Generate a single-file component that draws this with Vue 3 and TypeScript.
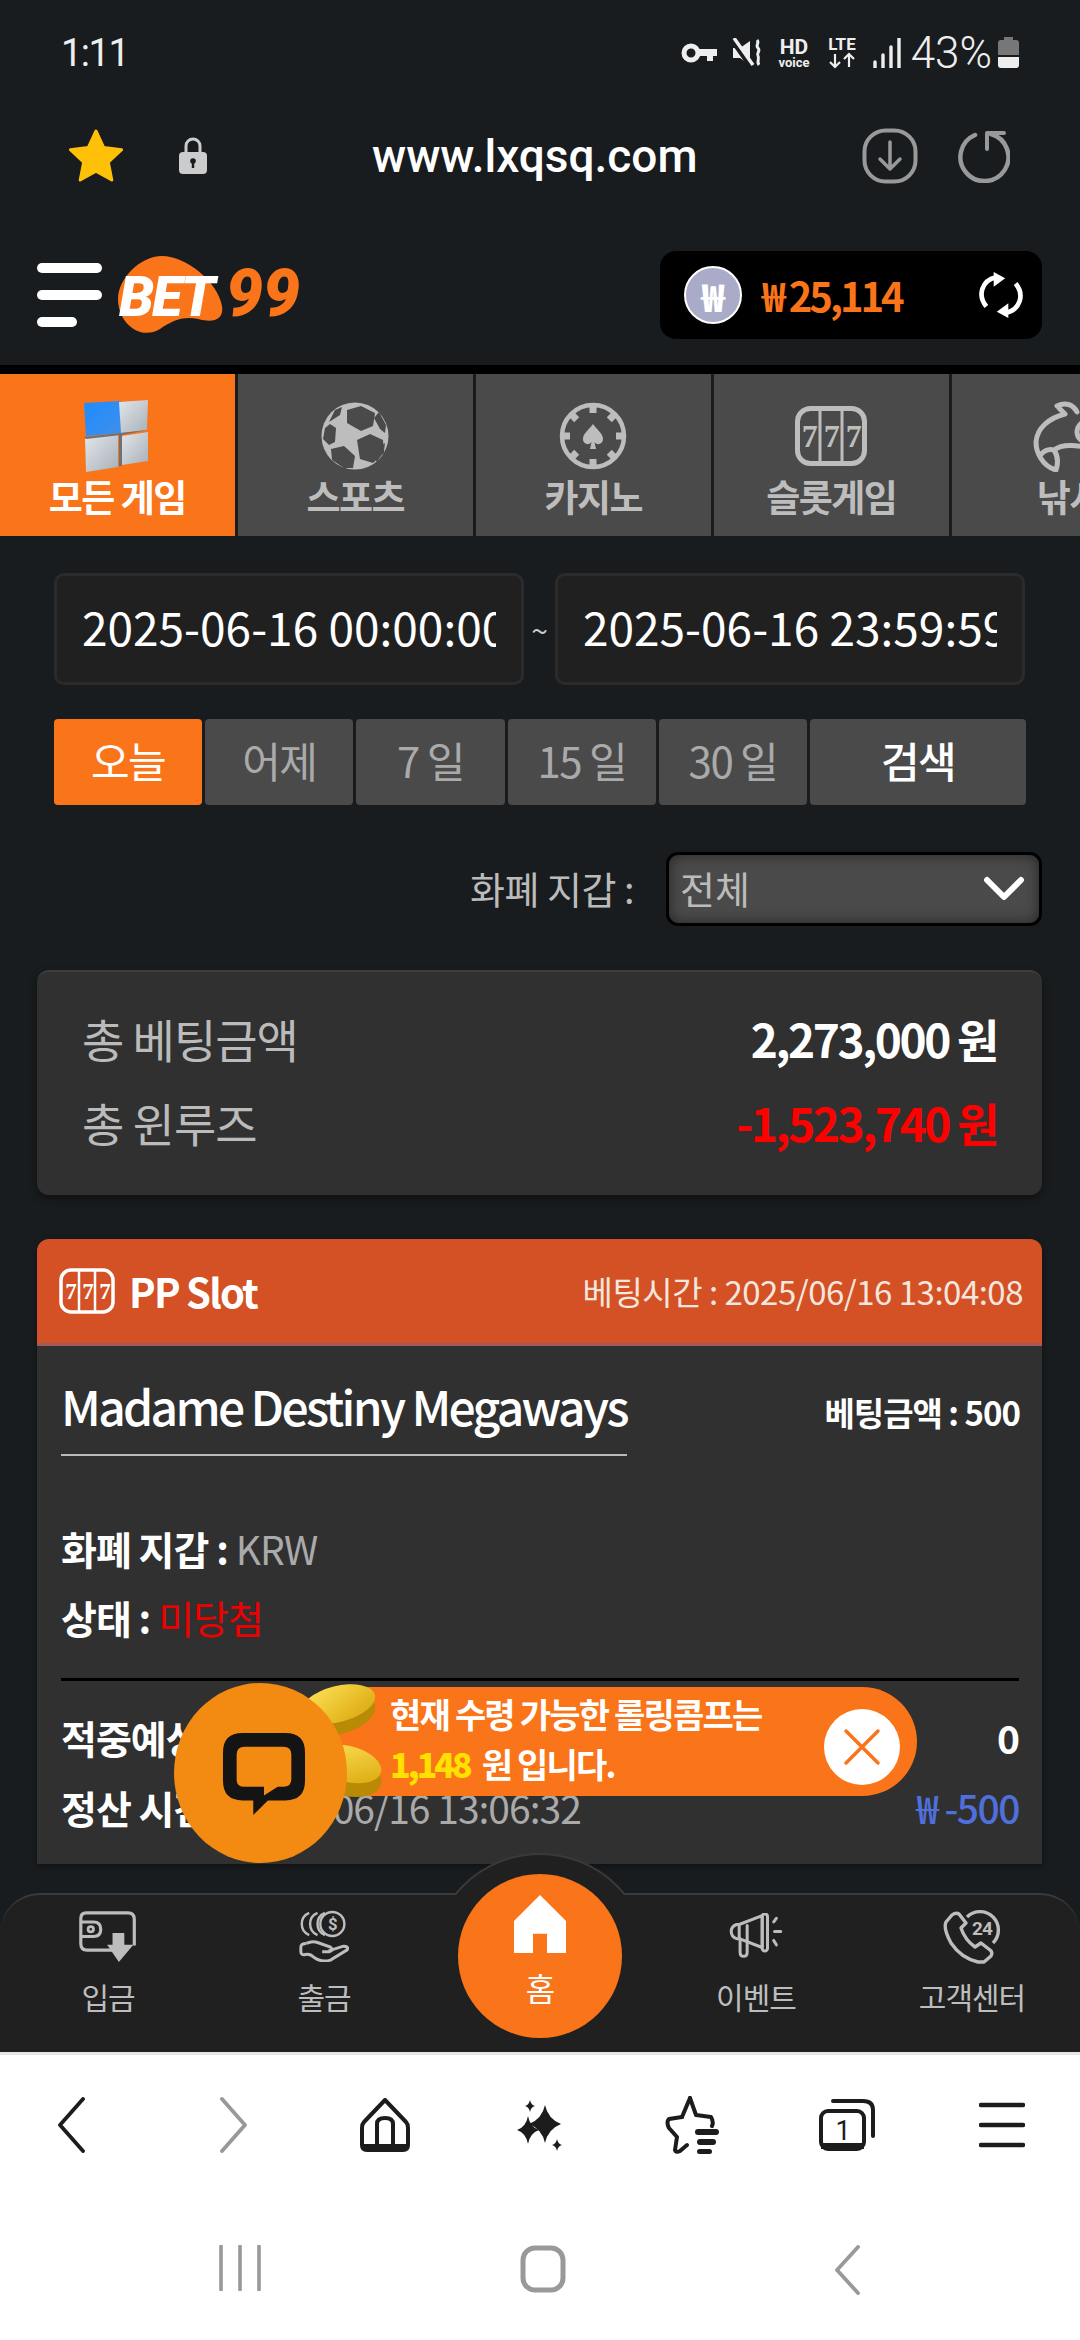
<template>
  <div class="phone">
    <div class="status">
      <span class="time">1:11</span>
      <div class="status-right">
        <svg width="36" height="20" viewBox="0 0 36 20"><circle cx="10" cy="10" r="7" fill="none" stroke="#eee" stroke-width="5"/><path d="M17 6h19v7h-4v5h-6v-5h-9z" fill="#eee"/></svg>
        <svg width="30" height="30" viewBox="0 0 30 30"><path d="M1 10h7l10-7v24L8 20H1z" fill="#eee"/><path d="M0 1l19 27" stroke="#191c1e" stroke-width="6"/><path d="M2 0l19 27" stroke="#eee" stroke-width="3.400"/><path d="M25 2c3 3-2 5 1 8s-2 5 0 8-2 5 1 9" fill="none" stroke="#eee" stroke-width="3"/></svg>
        <svg width="34" height="32" viewBox="0 0 34 32"><text x="17" y="17" class="hd">HD</text><text x="17" y="30" class="voice">voice</text></svg>
        <svg width="32" height="34" viewBox="0 0 32 34"><text x="16" y="14" class="lte">LTE</text><path d="M9 18v13M4 26l5 5 5-5M23 31V18M18 23l5-5 5 5" fill="none" stroke="#eee" stroke-width="2.200"/></svg>
        <svg width="28" height="30" viewBox="0 0 28 30"><path d="M2 24v6M10 17v13M18 9v21M26 0v30" stroke="#eee" stroke-width="3.400" stroke-linecap="round" fill="none"/></svg>
        <span class="batt-text">43%</span>
        <svg width="21" height="31" viewBox="0 0 21 31"><path d="M6 0h9v3h3q3 0 3 3v12H0V6q0-3 3-3h3z" fill="#777"/><path d="M0 20h21v8q0 3-3 3H3q-3 0-3-3z" fill="#eee"/></svg>
      </div>
    </div>

    <div class="urlbar">
      <svg class="url-star" width="56" height="54" viewBox="0 0 56 54"><path d="M28 2l7.600 16.500 18 2.200-13.300 12.400 3.500 17.900L28 42.100l-15.800 8.900 3.500-17.900L2.400 20.700l18-2.200z" fill="#ffc107" stroke="#ffc107" stroke-width="3" stroke-linejoin="round"/></svg>
      <svg class="url-lock" width="30" height="38" viewBox="0 0 30 38"><path d="M8 17V9a7 7 0 0 1 14 0v8" fill="none" stroke="#ccc" stroke-width="3"/><rect x="1" y="15" width="28" height="22" rx="4" fill="#ccc"/><circle cx="15" cy="24" r="2.800" fill="#191c1e"/><rect x="13.800" y="24" width="2.400" height="7" fill="#191c1e"/></svg>
      <span class="url">www.lxqsq.com</span>
      <svg class="url-dl" width="56" height="56" viewBox="0 0 56 56"><rect x="2.500" y="2.500" width="51" height="51" rx="21" fill="none" stroke="#999" stroke-width="4"/><path d="M28 14v27M18 31l10 10 10-10" fill="none" stroke="#999" stroke-width="3.500" stroke-linecap="round" stroke-linejoin="round"/></svg>
      <svg class="url-re" width="54" height="54" viewBox="0 0 54 54"><path d="M19 6A24 24 0 1 0 35 5" fill="none" stroke="#999" stroke-width="4.500" stroke-linecap="round"/><path d="M31 20V4h17" fill="none" stroke="#999" stroke-width="4" stroke-linecap="round" stroke-linejoin="round"/></svg>
    </div>

    <header class="topbar">
      <div class="menu"><i></i><i></i><i class="short"></i></div>
      <svg class="logo" width="190" height="80" viewBox="0 0 190 80">
        <path d="M2 44C2 24 24 1 46 1c24 0 56 26 60 50 2 14-8 17-24 13-16-3-26 2-38 10C24 86 2 68 2 44z" fill="#fa7419"/>
        <text x="3" y="61" class="logo-bet">BET</text>
        <text x="110" y="61" class="logo-99">99</text>
      </svg>
      <div class="balance">
        <span class="coin">₩</span>
        <span class="amount">₩ 25,114</span>
        <svg width="46" height="48" viewBox="0 0 44 44"><path d="M8 33C-1 22 4 8 17 5" fill="none" stroke="#fff" stroke-width="4.500"/><path d="M15 0l11 6-11 8z" fill="#fff"/><path d="M36 11c9 11 4 25-9 28" fill="none" stroke="#fff" stroke-width="4.500"/><path d="M29 44l-11-6 11-8z" fill="#fff"/></svg>
      </div>
    </header>

    <nav class="tabs">
      <div class="tab active">
        <svg width="70" height="72" viewBox="0 0 70 72">
          <defs>
            <linearGradient id="blue" x1="0" y1="0" x2="1" y2="1"><stop offset="0" stop-color="#1e8cff"/><stop offset="1" stop-color="#3f8fe8"/></linearGradient>
            <linearGradient id="grey" x1="0" y1="0" x2="1" y2="1"><stop offset="0" stop-color="#e2e6ea"/><stop offset="1" stop-color="#a8b0b8"/></linearGradient>
          </defs>
          <path d="M2 3l37-2v32L4 36z" fill="url(#blue)"/>
          <path d="M37 2l29-2-1 30-26 3z" fill="url(#grey)"/>
          <path d="M3 38l33-3v32L4 72z" fill="url(#grey)"/>
          <path d="M40 36l26-4v29l-26 4z" fill="url(#grey)"/>
          <path d="M2 37l36-4 28-3-27 5-35 4z" fill="#6b7378"/>
          <path d="M37 33h3v33h-3z" fill="#6b7378"/>
        </svg>
        <span>모든 게임</span>
      </div>
      <div class="tab">
        <svg width="68" height="68" viewBox="-34 -34 68 68">
          <circle r="33.500" fill="#bdbdbd"/>
          <g fill="#4a4a4a">
            <path d="M-8-26l14-4 14 7-2 13-12 5-14-8z"/>
            <path d="M2 4l13-6 13 6 1 13-11 10-13-4z"/>
            <path d="M-24 13l13-3 11 10-2 12-9 0-12-8z"/>
            <path d="M-30-8l5-4 6 4-1 14-6 3-6-6z"/>
            <path d="M-20-26l7-3-2 8-11 7z"/>
            <path d="M24-24l7 13-1 8-5-4-6-11z"/>
            <path d="M30 7l-1 8-7 11-2-3 6-13z"/>
          </g>
        </svg>
        <span>스포츠</span>
      </div>
      <div class="tab">
        <svg width="68" height="68" viewBox="-34 -34 68 68">
          <circle r="31" fill="none" stroke="#bdbdbd" stroke-width="4.500"/>
          <g fill="#bdbdbd">
            <rect v-for="a in [0, 45, 90, 135, 180, 225, 270, 315]" :key="a" x="-3.500" y="-31" width="7" height="8" :transform="`rotate(${a})`"/>
          </g>
          <path d="M0-12C3-7 10-3 10 3c0 5-6 7-8.500 3l1.500 7H-3l1.500-7C-4 10-10 8-10 3-10-3-3-7 0-12z" fill="#bdbdbd"/>
        </svg>
        <span>카지노</span>
      </div>
      <div class="tab">
        <svg width="72" height="60" viewBox="0 0 72 60">
          <rect x="2.500" y="2.500" width="67" height="55" rx="13" fill="none" stroke="#bdbdbd" stroke-width="5"/>
          <path d="M25 3v54M47 3v54" stroke="#bdbdbd" stroke-width="3"/>
          <text x="14" y="41" class="seven">7</text>
          <text x="36" y="41" class="seven">7</text>
          <text x="58" y="41" class="seven">7</text>
        </svg>
        <span>슬롯게임</span>
      </div>
      <div class="tab">
        <svg width="72" height="72" viewBox="0 0 72 72">
          <path d="M24 6c8-4 16-2 20 6M26 8c4 4 4 4 6 6C16 18 4 28 3 42c0 10 6 24 20 28 2-6 2-14-2-20-6-2-12 2-14 6 M21 50c10-8 26-4 46 0M70 18c-14-4-26 6-26 14 0 8 10 14 24 16" fill="none" stroke="#bdbdbd" stroke-width="5" stroke-linejoin="round" stroke-linecap="round"/>
        </svg>
        <span>낚시</span>
      </div>
    </nav>

    <main class="content">
      <div class="dates">
        <div class="date"><span>2025-06-16 00:00:00</span></div>
        <span class="tilde">~</span>
        <div class="date"><span>2025-06-16 23:59:59</span></div>
      </div>

      <div class="ranges">
        <button
          v-for="r in ranges"
          :key="r"
          class="range"
          :class="{ on: r === '오늘' }"
        >{{ r }}</button>
        <button class="range search">검색</button>
      </div>

      <div class="wallet">
        <span class="wallet-label">화폐 지갑 :</span>
        <div class="select">
          <span>전체</span>
          <svg width="42" height="26" viewBox="0 0 42 26"><path d="M4 4l17 17L38 4" fill="none" stroke="#fff" stroke-width="6" stroke-linecap="round" stroke-linejoin="round"/></svg>
        </div>
      </div>

      <section class="summary">
        <div class="sum-row"><span>총 베팅금액</span><b>2,273,000 원</b></div>
        <div class="sum-row"><span>총 윈루즈</span><b class="red">-1,523,740 원</b></div>
      </section>

      <section class="game">
        <div class="game-head">
          <div class="game-name">
            <svg width="56" height="46" viewBox="0 0 56 46">
              <rect x="2" y="2" width="52" height="42" rx="10" fill="none" stroke="#fff" stroke-width="3.500"/>
              <path d="M20 2v42M36 2v42" stroke="#fff" stroke-width="2.500"/>
              <text x="11" y="31" class="seven small">7</text>
              <text x="28" y="31" class="seven small">7</text>
              <text x="45" y="31" class="seven small">7</text>
            </svg>
            <span>PP Slot</span>
          </div>
          <span class="bet-time">베팅시간 : 2025/06/16 13:04:08</span>
        </div>
        <div class="game-body">
          <div class="title-row">
            <h2>Madame Destiny Megaways</h2>
            <span class="bet-amount">베팅금액 : 500</span>
          </div>
          <p class="line first">화폐 지갑 : <em>KRW</em></p>
          <p class="line">상태 : <em class="lost">미당첨</em></p>
          <div class="divider"></div>
          <div class="line split top"><span>적중예상금액 :</span><span>0</span></div>
          <div class="line split"><span>정산 시간 : <em>2025/06/16 13:06:32</em></span><span class="blue">₩ -500</span></div>
        </div>
      </section>

      <div class="promo">
        <svg class="coins" width="90" height="128" viewBox="0 0 90 128">
          <defs>
            <linearGradient id="gold" x1="0" y1="0" x2="1" y2="1"><stop offset="0" stop-color="#ffe35a"/><stop offset="1" stop-color="#d9a60a"/></linearGradient>
          </defs>
          <ellipse cx="44" cy="30" rx="38" ry="20" fill="#b98a06" transform="rotate(-14 44 30)"/>
          <ellipse cx="44" cy="20" rx="38" ry="18" fill="url(#gold)" transform="rotate(-14 44 20)"/>
          <ellipse cx="54" cy="92" rx="34" ry="20" fill="#b98a06" transform="rotate(14 54 92)"/>
          <ellipse cx="54" cy="80" rx="34" ry="18" fill="url(#gold)" transform="rotate(14 54 80)"/>
        </svg>
        <div class="promo-text">
          <span>현재 수령 가능한 롤링콤프는</span>
          <span><b>1,148</b> 원 입니다.</span>
        </div>
        <div class="promo-close">
          <svg width="38" height="38" viewBox="0 0 38 38"><path d="M3 3l32 32M35 3L3 35" stroke="#fa7419" stroke-width="3.500" stroke-linecap="round"/></svg>
        </div>
      </div>

      <div class="chat">
        <svg width="84" height="84" viewBox="0 0 84 86"><path fill-rule="evenodd" d="M20 0h44q20 0 20 20v29q0 20-20 20H46L31 84V69H20Q0 69 0 49V20Q0 0 20 0zM22 14q-8 0-8 8v26q0 7 8 7h20v9l14-9h6q8 0 8-8V22q0-8-8-8z" fill="#141414"/></svg>
      </div>
    </main>

    <footer class="bottom-nav">
      <div class="bump"></div>
      <div class="nav-item">
        <div class="nav-icon"><svg width="58" height="51" viewBox="0 0 64 56"><path d="M38 43H9q-7 0-7-7V8q0-6 6-6h46q7 0 7 7v29" fill="none" stroke="#bdbdbd" stroke-width="3.500"/><path d="M2 12h14q8 0 8 8t-8 8H3" fill="none" stroke="#bdbdbd" stroke-width="3.500"/><circle cx="13" cy="20" r="3" fill="none" stroke="#bdbdbd" stroke-width="3"/><path d="M37 24h13v13h10L44 56 31 37h6z" fill="#bdbdbd"/></svg></div>
        <span>입금</span>
      </div>
      <div class="nav-item">
        <div class="nav-icon"><svg width="50" height="52" viewBox="0 0 54 56"><g fill="none" stroke="#bdbdbd" stroke-width="2.600"><path d="M11 3A13 13 0 0 0 11 27"/><path d="M20 3A13 13 0 0 0 20 27"/><path d="M28 3A13 13 0 0 0 28 27"/><circle cx="36" cy="15" r="13"/><path d="M8 36q-6 0-6 4v5q0 4 5 3 5-1 9 3 8 6 18 3l18-11q2-4-4-4l-16 5" stroke-width="3.200"/><path d="M8 36q6-3 12-1l14 5q4 3-1 5l-8 0" stroke-width="3.200"/></g><text x="36" y="21" class="dollar">$</text></svg></div>
        <span>출금</span>
      </div>
      <div class="nav-home">
        <svg width="52" height="58" viewBox="0 0 52 60" preserveAspectRatio="none"><path d="M26 0l26 27v33H33V40H19v20H0V27z" fill="#fff"/></svg>
        <span>홈</span>
      </div>
      <div class="nav-item">
        <div class="nav-icon"><svg width="58" height="46" viewBox="0 0 60 52"><g fill="none" stroke="#bdbdbd" stroke-width="3.400" stroke-linejoin="round" stroke-linecap="round"><path d="M11 13v16H8q-6-2-6-8t6-8zM11 13l26-10v36L11 29zM20 14v17"/><rect x="37" y="1" width="6" height="42" rx="3"/><path d="M12 29v15q0 5 4 5t4-5V31"/><path d="M50 10l3-4M51 21h7M50 31l3 5"/></g></svg></div>
        <span>이벤트</span>
      </div>
      <div class="nav-item">
        <div class="nav-icon"><svg width="58" height="58" viewBox="0 0 58 58"><g fill="none" stroke="#bdbdbd" stroke-width="3.400" stroke-linejoin="round"><path d="M24 10A18 18 0 1 1 50 36"/><path d="M9 8L3 15q-3 6 5 21 10 15 27 19h6l7-6q2-4-1-6l-9-7-6 4q-10-7-14-19l5-5-7-9q-3-2-7 1z"/></g><text x="39" y="28" class="h24">24</text></svg></div>
        <span>고객센터</span>
      </div>
      <div class="home-circle"></div>
    </footer>

    <div class="browser-bar">
      <svg width="34" height="56" viewBox="0 0 34 56"><path d="M27 2L4 28l23 26" fill="none" stroke="#1c1c1c" stroke-width="3.800" stroke-linecap="round" stroke-linejoin="round"/></svg>
      <svg width="34" height="56" viewBox="0 0 34 56"><path d="M5 2l23 26L5 54" fill="none" stroke="#999" stroke-width="3.800" stroke-linecap="round" stroke-linejoin="round"/></svg>
      <svg width="52" height="54" viewBox="0 0 52 54"><path d="M26 2L5 24q-2 2-2 6v17q0 5 5 5h36q5 0 5-5V30q0-4-2-6z" fill="none" stroke="#1c1c1c" stroke-width="4" stroke-linejoin="round"/><path d="M18 50V26q0-6 8-6t8 6v24" fill="none" stroke="#1c1c1c" stroke-width="4"/><path d="M3 46h46v6H3z" fill="#1c1c1c"/></svg>
      <svg width="46" height="52" viewBox="0 0 46 52"><g fill="#1c1c1c"><path d="M29 6Q32 20 45 25Q32 30 29 44Q26 30 13 25Q26 20 29 6z"/><path d="M12 17Q14 28 23 31Q14 34 12 45Q10 34 1 31Q10 28 12 17z"/><path d="M14 1Q15 6 19 7Q15 8 14 13Q13 8 9 7Q13 6 14 1z"/><path d="M41 40Q42 45 46 46Q42 47 41 52Q40 47 36 46Q40 45 41 40z"/></g></svg>
      <svg width="58" height="58" viewBox="0 0 58 58"><path d="M27 2l6 17 15 2q3 5 1 9M19 21L6 23q-3 3 0 9l8 9-2 13q1 3 5 1l7-6" fill="none" stroke="#1c1c1c" stroke-width="4" stroke-linejoin="round" stroke-linecap="round"/><path d="M27 2l-8 19" stroke="#1c1c1c" stroke-width="4" stroke-linecap="round"/><rect x="32" y="33" width="24" height="6" rx="3" fill="#1c1c1c"/><rect x="34" y="43" width="19" height="6" rx="3" fill="#1c1c1c"/><rect x="34" y="53" width="15" height="5" rx="2.500" fill="#1c1c1c"/></svg>
      <svg width="56" height="52" viewBox="0 0 56 52"><rect x="2" y="12" width="43" height="38" rx="7" fill="none" stroke="#1c1c1c" stroke-width="4"/><path d="M14 2h30q10 0 10 9v26" fill="none" stroke="#1c1c1c" stroke-width="4" stroke-linecap="round"/><path d="M2 44h43v6H2z" fill="#1c1c1c"/><text x="24" y="41" class="tabnum">1</text></svg>
      <svg width="46" height="46" viewBox="0 0 46 46"><path d="M2 3h42M2 23h42M2 43h42" stroke="#1c1c1c" stroke-width="4.400" stroke-linecap="round"/></svg>
    </div>

    <div class="sys-nav">
      <svg width="42" height="46" viewBox="0 0 42 46"><path d="M2 1v44M21 1v44M40 1v44" stroke="#999" stroke-width="3.600" stroke-linecap="round"/></svg>
      <svg width="46" height="48" viewBox="0 0 46 48"><rect x="3" y="3" width="40" height="42" rx="12" fill="none" stroke="#999" stroke-width="5"/></svg>
      <svg width="28" height="50" viewBox="0 0 28 50"><path d="M25 2L4 25l21 23" fill="none" stroke="#999" stroke-width="3.800" stroke-linecap="round" stroke-linejoin="round"/></svg>
    </div>
  </div>
</template>

<script setup lang="ts">
const ranges: string[] = ["오늘", "어제", "7 일", "15 일", "30 일"];
</script>

<style scoped>
.phone {
  width: 1080px;
  height: 2340px;
  overflow: hidden;
  display: flex;
  flex-direction: column;
  background: #191c1e;
  font-family: "Noto Sans CJK KR", "Noto Sans", sans-serif;
  color: #fff;
}

/* status bar */
.status {
  height: 100px;
  flex-shrink: 0;
  box-sizing: border-box;
  padding: 5px 61px 0 61px;
  display: flex;
  justify-content: space-between;
  align-items: center;
  font-family: Roboto, sans-serif;
  color: #eee;
}
.time {
  font-size: 38px;
  letter-spacing: -1.500px;
}
.status-right {
  display: flex;
  align-items: center;
  gap: 15px;
}
.batt-text {
  font-size: 44px;
  font-weight: 300;
  margin: 0 -9px 0 -5px;
}
.hd {
  font: 700 21px Roboto, sans-serif;
  fill: #eee;
  text-anchor: middle;
}
.voice {
  font: 700 13px Roboto, sans-serif;
  fill: #eee;
  text-anchor: middle;
}
.lte {
  font: 700 17px Roboto, sans-serif;
  fill: #eee;
  text-anchor: middle;
}

/* url bar */
.urlbar {
  height: 115px;
  flex-shrink: 0;
  box-sizing: border-box;
  display: flex;
  align-items: center;
  padding: 0 0 4px 68px;
}
.url-lock {
  margin-left: 54px;
}
.url {
  margin-left: 164px;
  font: 500 46px Roboto, sans-serif;
  color: #fff;
}
.url-dl {
  margin-left: 164px;
}
.url-re {
  margin-left: 38px;
}

/* site header */
.topbar {
  height: 150px;
  flex-shrink: 0;
  box-sizing: border-box;
  padding: 10px 38px 0 37px;
  display: flex;
  align-items: center;
}
.menu {
  width: 65px;
  display: flex;
  flex-direction: column;
  gap: 17px;
}
.menu i {
  display: block;
  height: 10px;
  border-radius: 5px;
  background: #fff;
}
.menu i.short {
  width: 40px;
}
.logo {
  margin-left: 14px;
}
.logo-bet {
  font: italic 900 56px Roboto, sans-serif;
  letter-spacing: -2px;
  fill: #fff;
}
.logo-99 {
  font: italic 900 66px Roboto, sans-serif;
  fill: #fa7419;
}
.balance {
  margin-left: auto;
  width: 382px;
  height: 88px;
  border-radius: 16px;
  background: #000;
  display: flex;
  align-items: center;
  padding: 0 18px 0 24px;
  box-sizing: border-box;
}
.coin {
  width: 58px;
  height: 58px;
  border-radius: 50%;
  background: #a9abc9;
  border: 2px solid #fff;
  box-sizing: border-box;
  display: flex;
  align-items: center;
  justify-content: center;
  font: 900 38px "Noto Sans CJK KR", sans-serif;
  color: #fff;
}
.amount {
  margin-left: 20px;
  font-size: 40px;
  font-weight: 700;
  letter-spacing: -3px;
  color: #fa7419;
}
.balance svg {
  margin-left: auto;
}

/* game tabs */
.tabs {
  flex-shrink: 0;
  height: 162px;
  border-top: 9px solid #000;
  display: flex;
  gap: 3.500px;
  overflow: hidden;
}
.tab {
  flex: 0 0 234.500px;
  background: #4a4a4a;
  display: flex;
  flex-direction: column;
  align-items: center;
  padding-top: 26px;
  box-sizing: border-box;
  color: #bdbdbd;
  font-size: 37px;
  font-weight: 700;
  line-height: 48px;
  letter-spacing: -1.500px;
}
.tab svg {
  height: 72px;
}
.tab.active {
  background: #fa7419;
  color: #fff;
}
.seven {
  font: 700 32px "Liberation Serif", serif;
  fill: #bdbdbd;
  text-anchor: middle;
}
.seven.small {
  font-size: 23px;
  fill: #fff;
}

/* content */
.content {
  position: relative;
  height: 1357px;
  flex-shrink: 0;
  padding: 37px 38px 0 37px;
  box-sizing: border-box;
}
.dates {
  display: flex;
  align-items: center;
  margin: 0 17px;
}
.date {
  width: 470px;
  height: 112px;
  box-sizing: border-box;
  background: #202020;
  border: 3px solid #2b2b2b;
  border-radius: 10px;
  padding: 0 25px 6px;
  display: flex;
  align-items: center;
}
.date span {
  display: block;
  width: 416px;
  overflow: hidden;
  white-space: nowrap;
  font-size: 46px;
  line-height: 60px;
}
.tilde {
  width: 31px;
  text-align: center;
  font-size: 30px;
  color: #ccc;
}
.ranges {
  display: flex;
  gap: 3px;
  margin: 34px 16px 0 17px;
}
.range {
  flex: 1 1 0;
  height: 86px;
  border: 0;
  border-radius: 4px;
  background: #4a4a4a;
  color: #aaa;
  font: 400 42px "Noto Sans CJK KR", sans-serif;
  letter-spacing: -1.500px;
  padding: 0 0 6px;
}
.range.on {
  background: #fa7419;
  color: #fff;
}
.range.search {
  flex: 0 0 216px;
  color: #fff;
  font-weight: 500;
}
.wallet {
  display: flex;
  justify-content: flex-end;
  align-items: center;
  margin-top: 47px;
  gap: 32px;
}
.wallet-label {
  font-size: 38px;
  color: #bbb;
  letter-spacing: -0.500px;
  margin-bottom: 4px;
}
.select {
  width: 376px;
  height: 74px;
  box-sizing: border-box;
  border: 3px solid #000;
  border-radius: 12px;
  background: #4a4a4a;
  box-shadow: inset 0 0 14px rgba(0, 0, 0, 0.5);
  padding: 0 14px 4px 11px;
  display: flex;
  align-items: center;
  justify-content: space-between;
  font-size: 38px;
  color: #bbb;
}
.select svg {
  margin-top: 4px;
}
.summary {
  margin-top: 44px;
  height: 225px;
  box-sizing: border-box;
  background: #303030;
  border-top: 2px solid #3d3d3d;
  border-radius: 12px;
  box-shadow: 0 4px 8px rgba(0, 0, 0, 0.4);
  padding: 24px 45px 0;
}
.sum-row {
  display: flex;
  justify-content: space-between;
  align-items: center;
  height: 84px;
  font-size: 46px;
  color: #bbb;
  letter-spacing: -1px;
}
.sum-row b {
  color: #fff;
  font-weight: 700;
  letter-spacing: -2.400px;
}
.sum-row b.red {
  color: #f00;
}
.game {
  margin-top: 44px;
  height: 625px;
  background: #303030;
  border-radius: 12px 12px 0 0;
  box-shadow: 0 2px 6px rgba(0, 0, 0, 0.4);
}
.game-head {
  height: 107px;
  box-sizing: border-box;
  background: #d35124;
  border-bottom: 3px solid #a25a58;
  border-radius: 12px 12px 0 0;
  display: flex;
  align-items: center;
  justify-content: space-between;
  padding: 0 19px 0 22px;
}
.game-name {
  display: flex;
  align-items: center;
  gap: 14px;
  font-size: 40px;
  font-weight: 700;
  letter-spacing: -1.800px;
}
.bet-time {
  font-size: 33px;
  color: #f3e6df;
  letter-spacing: -0.500px;
}
.game-body {
  padding: 0 23px 0 24px;
}
.title-row {
  display: flex;
  justify-content: space-between;
  align-items: center;
  padding-top: 22px;
}
.title-row h2 {
  margin: 0;
  font-size: 48px;
  font-weight: 500;
  line-height: 74px;
  padding-bottom: 12px;
  letter-spacing: -2.700px;
  border-bottom: 2px solid #bbb;
}
.bet-amount {
  font-size: 33px;
  font-weight: 700;
  letter-spacing: -1px;
  margin-right: -1px;
}
.line {
  margin: 0;
  font-size: 39px;
  font-weight: 700;
  line-height: 69px;
  letter-spacing: -1px;
}
.line.first {
  margin-top: 58px;
}
.line em {
  font-style: normal;
  font-weight: 400;
  color: #aaa;
}
.line em.lost {
  color: #e00;
}
.divider {
  height: 3px;
  margin-top: 26px;
  background: #000;
}
.split {
  display: flex;
  justify-content: space-between;
  line-height: 70px;
}
.split.top {
  margin-top: 21px;
}
.blue {
  color: #4f6fdc;
  font-weight: 500;
  letter-spacing: -1.500px;
}

/* overlays */
.promo {
  position: absolute;
  left: 290px;
  top: 1151px;
  width: 627px;
  height: 109px;
  border-radius: 56px;
  background: #fa7419;
  display: flex;
  align-items: center;
}
.coins {
  position: absolute;
  left: 4px;
  top: -3px;
}
.promo-text {
  margin: -6px 0 0 100px;
  display: flex;
  flex-direction: column;
  font-size: 34px;
  font-weight: 700;
  line-height: 50px;
  letter-spacing: -1.800px;
}
.promo-text b {
  color: #ffe000;
  margin-right: 6px;
  letter-spacing: -3px;
}
.promo-close {
  position: absolute;
  right: 17px;
  top: 22px;
  width: 76px;
  height: 76px;
  border-radius: 50%;
  background: #fff;
  display: flex;
  align-items: center;
  justify-content: center;
}
.chat {
  position: absolute;
  left: 174px;
  top: 1147px;
  width: 173px;
  height: 180px;
  border-radius: 50%;
  background: #f38a12;
  display: flex;
  align-items: center;
  justify-content: center;
  padding: 3px 0 0 7px;
  box-sizing: border-box;
}

/* bottom nav */
.bottom-nav {
  position: relative;
  flex-shrink: 0;
  height: 159px;
  box-sizing: border-box;
  background: #202020;
  border-top: 2px solid #3a3a3a;
  border-radius: 40px 40px 0 0;
  display: flex;
}
.bump {
  position: absolute;
  left: 430px;
  top: -42px;
  width: 220px;
  height: 220px;
  box-sizing: border-box;
  border-radius: 50%;
  background: #202020;
  border: 2px solid #3a3a3a;
  clip-path: inset(0 0 178px 0);
}
.nav-item,
.nav-home {
  width: 216px;
  display: flex;
  flex-direction: column;
  align-items: center;
  padding-top: 12px;
  box-sizing: border-box;
  color: #bdbdbd;
  font-size: 30px;
  line-height: 42px;
  letter-spacing: -1px;
}
.nav-icon {
  height: 58px;
  margin-bottom: 10px;
  display: flex;
  align-items: center;
}
.nav-home {
  position: relative;
  z-index: 1;
  padding-top: 0;
  color: #fff;
  font-size: 32px;
  line-height: 42px;
}
.nav-home svg {
  margin-bottom: 13px;
}
.home-circle {
  position: absolute;
  left: 458px;
  top: -21px;
  width: 164px;
  height: 164px;
  border-radius: 50%;
  background: #fa7419;
}

/* browser toolbar */
.browser-bar {
  flex-shrink: 0;
  height: 146px;
  box-sizing: border-box;
  background: #fff;
  border-top: 3px solid #e5e5e5;
  display: grid;
  grid-template-columns: 146px 176px 126px 182px 124px 186px 124px;
  justify-items: center;
  align-items: center;
  padding-bottom: 4px;
}
.tabnum {
  font: 400 27px Roboto, sans-serif;
  fill: #1c1c1c;
  text-anchor: middle;
}
.dollar {
  font: 700 18px Roboto, sans-serif;
  fill: #bdbdbd;
  text-anchor: middle;
}
.h24 {
  font: 700 19px Roboto, sans-serif;
  fill: #bdbdbd;
  text-anchor: middle;
}

/* android nav */
.sys-nav {
  flex: 1;
  background: #fff;
  display: flex;
  align-items: flex-start;
  justify-content: center;
  padding-top: 47px;
}
.sys-nav svg:nth-child(1) {
  margin-right: 259px;
}
.sys-nav svg:nth-child(2) {
  margin-right: 267px;
}
</style>

<style>
html,
body {
  margin: 0;
  background: #191c1e;
}
</style>
